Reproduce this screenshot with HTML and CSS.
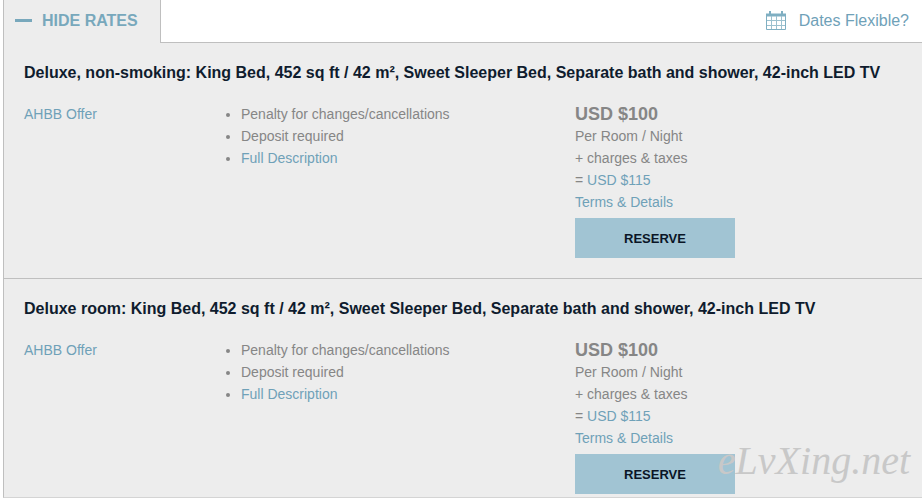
FILE: index.html
```
<!DOCTYPE html>
<html lang="en">
<head>
    <meta charset="UTF-8">
    <meta name="viewport" content="width=device-width, initial-scale=1.0">
    <title>Room Rates</title>
    <link rel="stylesheet" href="styles.css">
</head>
<body>
    <main class="rates">
        <div class="rates-header">
            <button type="button" class="rates-tab"><span class="minus"></span>HIDE RATES</button>
            <div class="rates-tools">
                <a href="#" class="dates-link">
                    <svg width="20" height="20" viewBox="0 0 20 20" fill="none" stroke="#7fafc2">
                        <path d="M0.5 3.5h19v15h-19z"/>
                        <path d="M0 4h20" stroke-width="3"/>
                        <path d="M4 0v4M16 0v4" stroke-width="2"/>
                        <path d="M1 9.5h18M1 14.5h18M5.5 5v13M10.5 5v13M15.5 5v13" stroke="#9cc1cf"/>
                    </svg>
                    Dates Flexible?
                </a>
            </div>
        </div>
        <section class="room">
            <h2>Deluxe, non-smoking: King Bed, 452 sq ft / 42 m², Sweet Sleeper Bed, Separate bath and shower, 42-inch LED TV</h2>
            <div class="room-details">
                <div><a href="#">AHBB Offer</a></div>
                <ul>
                    <li>Penalty for changes/cancellations</li>
                    <li>Deposit required</li>
                    <li><a href="#">Full Description</a></li>
                </ul>
                <div class="room-price">
                    <strong>USD $100</strong>
                    <span>Per Room / Night</span>
                    <span>+ charges &amp; taxes</span>
                    <span>= <a href="#">USD $115</a></span>
                    <a href="#">Terms &amp; Details</a>
                    <button type="button" class="reserve">RESERVE</button>
                </div>
            </div>
        </section>
        <section class="room">
            <h2>Deluxe room: King Bed, 452 sq ft / 42 m², Sweet Sleeper Bed, Separate bath and shower, 42-inch LED TV</h2>
            <div class="room-details">
                <div><a href="#">AHBB Offer</a></div>
                <ul>
                    <li>Penalty for changes/cancellations</li>
                    <li>Deposit required</li>
                    <li><a href="#">Full Description</a></li>
                </ul>
                <div class="room-price">
                    <strong>USD $100</strong>
                    <span>Per Room / Night</span>
                    <span>+ charges &amp; taxes</span>
                    <span>= <a href="#">USD $115</a></span>
                    <a href="#">Terms &amp; Details</a>
                    <button type="button" class="reserve">RESERVE</button>
                </div>
            </div>
        </section>
        <div class="watermark">eLvXing.net</div>
    </main>
</body>
</html>
```

FILE: styles.css
```
body {
    font-family: "Liberation Sans", Arial, sans-serif;
    font-size: 14px;
    line-height: 22px;
    color: #868686;
    background-color: #ffffff;
    margin: 0;
}
a {
    color: #6fa1b8;
    text-decoration: none;
}
a:hover {
    text-decoration: underline;
}
button {
    font-family: inherit;
    font-weight: bold;
    border: none;
    cursor: pointer;
}
.rates {
    position: relative;
    margin-left: 3px;
    border-left: 1px solid #bfbfbf;
    border-bottom: 1px solid #d4d4d4;
    background-color: #ededed;
}
.rates-header {
    display: flex;
    height: 43px;
}
.rates-tab {
    display: flex;
    align-items: center;
    gap: 10px;
    padding: 0 22px 2px 11px;
    background: none;
    border-right: 1px solid #bfbfbf;
    color: #78a8bc;
    font-size: 16px;
}
.minus {
    width: 17px;
    height: 3px;
    background-color: #78a8bc;
}
.rates-tools {
    flex: 1;
    display: flex;
    justify-content: flex-end;
    align-items: center;
    padding-right: 13px;
    background-color: #ffffff;
    border-bottom: 1px solid #bfbfbf;
}
.dates-link {
    display: flex;
    align-items: center;
    gap: 13px;
    font-size: 16px;
}
.room {
    padding: 19px 20px 20px;
}
.room + .room {
    border-top: 1px solid #bfbfbf;
    padding-bottom: 3px;
}
.room h2 {
    margin: 0 0 19px;
    font-size: 16px;
    line-height: 22px;
    color: #0f1c2e;
}
.room-details {
    display: grid;
    grid-template-columns: 201fr 350fr 327fr;
}
.room-details ul {
    margin: 0;
    padding-left: 16px;
}
.room-price {
    display: flex;
    flex-direction: column;
    align-items: flex-start;
}
.room-price strong {
    font-size: 18px;
}
.reserve {
    width: 160px;
    height: 40px;
    margin-top: 5px;
    background-color: #a1c4d3;
    color: #0a1526;
    font-size: 13px;
}
/* site mark over the bottom right corner */
.watermark {
    position: absolute;
    right: 12px;
    bottom: 14px;
    font-family: "Liberation Serif", serif;
    font-style: italic;
    font-size: 40px;
    line-height: 44px;
    color: #c8c8c8;
    pointer-events: none;
}
```
